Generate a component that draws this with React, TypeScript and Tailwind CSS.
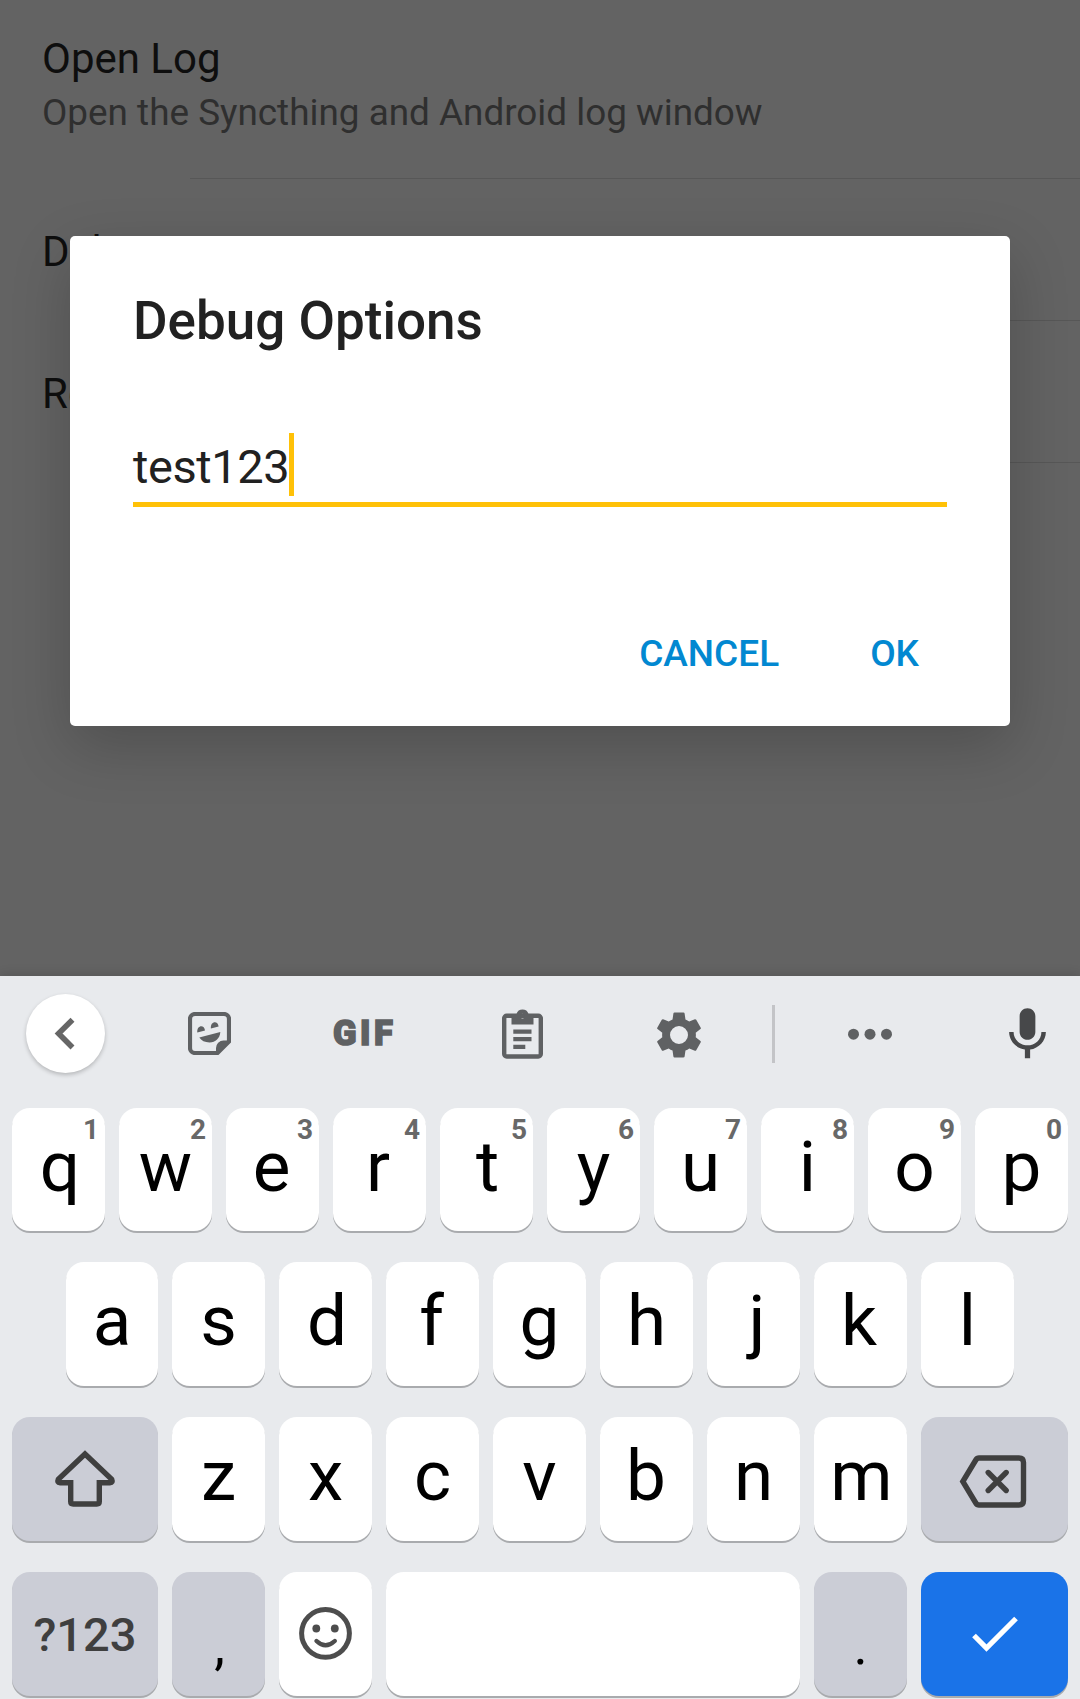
import type { ReactNode } from 'react';

function SettingsRow({ title, summary, className }: { title: string; summary?: string; className: string }) {
  return (
    <div className={`flex flex-col pl-[42px] ${className}`}>
      <div className="text-[42px] leading-[50px] text-[#0e0e0e]">{title}</div>
      {summary && <div className="mt-[7px] text-[36.87px] leading-[44px] text-[#2f2f2f]">{summary}</div>}
      <div className="mt-auto -ml-[42px] pl-[190px]">
        <div className="h-px bg-[#575757]" />
      </div>
    </div>
  );
}

function Key({
  children,
  tone = 'bg-white',
  width = 'w-[93px]',
  height = 'h-[124px]',
}: {
  children?: ReactNode;
  tone?: string;
  width?: string;
  height?: string;
}) {
  return (
    <div
      className={`relative flex shrink-0 justify-center rounded-[18px] shadow-[0_2px_0_#a9abae] ${height} ${tone} ${width}`}
    >
      {children}
    </div>
  );
}

// Optical centring for letters whose ink is off-centre in its advance width.
const NUDGE: Record<string, string> = {
  q: 'pl-[3px]',
  e: 'pr-[2px]',
  r: 'pr-[3px]',
  t: 'pl-[2px]',
  d: 'pl-[3px]',
  f: 'pr-[2px]',
  j: 'pl-[7px]',
  k: 'pr-[3px]',
  m: 'pl-[2px]',
  b: 'pr-[1px]',
};

function Letter({ children }: { children: string }) {
  return <span className={`text-[71px] leading-[118px] text-black ${NUDGE[children] ?? ''}`}>{children}</span>;
}

const GREY = 'bg-[#cbcdd6]';

function Toolbar() {
  return (
    <div className="flex h-[132px] items-start text-[#5f6163]">
      <div className="ml-[26px] mt-[18px] flex size-[79px] items-center justify-center rounded-full bg-white shadow-[0_2px_4px_rgba(0,0,0,0.22)]">
        <svg width="79" height="79" viewBox="0 0 79 79" fill="none" stroke="#666" strokeWidth="5.6">
          <path d="M46.5 25.8 32.6 39.600l13.900 13.900" />
        </svg>
      </div>
      <svg className="ml-[83px] mt-[36px]" width="43" height="43" viewBox="0 0 43 43" fill="none">
        <path
          d="M7 2H36a5 5 0 0 1 5 5V29.5L29.5 41H7a5 5 0 0 1-5-5V7a5 5 0 0 1 5-5Z"
          stroke="currentColor"
          strokeWidth="4.2"
        />
        <path d="M28 42.500V36a7.500 7.500 0 0 1 7.500-7.500H42.500L29.500 42.500Z" fill="currentColor" />
        <path d="M9.300 20.600C8.500 12.800 16.500 12 17 18.600ZM22.900 16.600C22.100 8.800 30.100 8 30.600 14.600Z" fill="currentColor" />
        <path d="M11.300 25.600 32.300 20C32 26 27.500 30.500 21.500 30.500 17 30.500 13.200 28.800 11.300 25.600Z" fill="currentColor" />
      </svg>
      <span className="ml-[102px] mt-[37px] w-[66px] whitespace-nowrap text-[34.500px] font-black leading-[41px] tracking-[3.500px] [-webkit-text-stroke:1.500px_currentColor]">
        GIF
      </span>
      <svg className="ml-[102.500px] mt-[33px]" width="41" height="50" viewBox="0 0 41 50">
        <rect x="2.200" y="6.700" width="36.600" height="40.800" rx="2.500" fill="none" stroke="currentColor" strokeWidth="4.400" />
        <path
          fill="currentColor"
          fillRule="evenodd"
          d="M9.500 5H14.500a6.300 6.300 0 0 1 12 0H31.500V15.500H9.500ZM20.500 4.800a2.400 2.400 0 1 0 0 4.800 2.400 2.400 0 0 0 0-4.800Z"
        />
        <path stroke="currentColor" strokeWidth="4.300" d="M11.300 22.600H29.500M11.300 30.200H29.500M11.300 37.800H23.300" />
      </svg>
      <svg className="ml-[109.500px] mt-[32px]" width="54" height="54" viewBox="0 0 24 24" fill="currentColor">
        <path
          fillRule="evenodd"
          d="M19.430 12.980c.04-.32.07-.64.07-.98s-.03-.66-.07-.98l2.110-1.650c.19-.15.24-.42.12-.64l-2-3.460c-.12-.22-.39-.3-.61-.22l-2.490 1c-.52-.4-1.080-.73-1.690-.98l-.38-2.650C14.460 2.180 14.250 2 14 2h-4c-.25 0-.46.18-.49.42l-.38 2.650c-.61.25-1.170.59-1.690.98l-2.490-1c-.23-.09-.49 0-.61.22l-2 3.460c-.13.22-.07.49.12.64l2.110 1.650c-.04.32-.07.65-.07.98s.03.66.07.98l-2.110 1.650c-.19.15-.24.42-.12.64l2 3.460c.12.22.39.3.61.22l2.490-1c.52.4 1.080.73 1.690.98l.38 2.650c.03.24.24.42.49.42h4c.25 0 .46-.18.49-.42l.38-2.650c.61-.25 1.170-.59 1.690-.98l2.490 1c.23.09.49 0 .61-.22l2-3.460c.12-.22.07-.49-.12-.64l-2.110-1.650zM12 16a4 4 0 1 1 0-8 4 4 0 0 1 0 8z"
        />
      </svg>
      <div className="ml-[66px] mt-[29px] h-[58px] w-[3px] bg-[#c3c4c7]" />
      <svg className="ml-[73px] mt-[52px]" width="44" height="12" viewBox="0 0 44 12" fill="currentColor">
        <circle cx="5.500" cy="6.200" r="5.500" />
        <circle cx="22" cy="6.200" r="5.500" />
        <circle cx="38.500" cy="6.200" r="5.500" />
      </svg>
      <svg className="ml-[104px] mt-[26.700px]" width="63" height="63" viewBox="0 0 24 24" fill="#47484a">
        <path d="M12 14c1.660 0 2.990-1.340 2.990-3L15 5c0-1.660-1.340-3-3-3S9 3.340 9 5v6c0 1.660 1.340 3 3 3zm5.300-3c0 3-2.540 5.100-5.300 5.100S6.700 14 6.700 11H5c0 3.410 2.720 6.230 6 6.720V21h2v-3.280c3.280-.48 6-3.300 6-6.720h-1.700z" />
      </svg>
    </div>
  );
}

function Keyboard() {
  return (
    <div className="relative h-[723px] bg-[#e8eaed] shadow-[0_-2px_10px_rgba(0,0,0,0.12)]">
      <Toolbar />
      <div className="flex flex-col gap-[31px]">
        <div className="flex gap-[14px] pl-[12px]">
          {'qwertyuiop'.split('').map((c, i) => (
            <Key key={c} height="h-[123px]">
              <Letter>{c}</Letter>
              <span className="absolute right-[6px] top-[8px] text-[28px] font-bold leading-[28px] text-[#686868]">
                {(i + 1) % 10}
              </span>
            </Key>
          ))}
        </div>
        <div className="flex gap-[14px] pl-[66px]">
          {'asdfghjkl'.split('').map((c, i) => (
            <Key key={c} width={i === 0 ? 'w-[92px]' : 'w-[93px]'}>
              <Letter>{c}</Letter>
            </Key>
          ))}
        </div>
        <div className="flex gap-[14px] pl-[12px]">
          <Key tone={GREY} width="w-[146px]">
            <svg width="146" height="124" viewBox="0 0 146 124" fill="none" stroke="#3f3f3f" strokeWidth="5.400">
              <path d="M73 37 46.300 62.300Q44.800 65.800 48 65.800H58.700V84.500Q58.700 87 61.200 87H84.800Q87.300 87 87.300 84.500V65.800H98Q101.200 65.800 99.700 62.300Z" />
            </svg>
          </Key>
          {'zxcvbnm'.split('').map((c) => (
            <Key key={c}>
              <Letter>{c}</Letter>
            </Key>
          ))}
          <Key tone={GREY} width="w-[147px]">
            <svg width="147" height="124" viewBox="0 0 147 124" fill="none" stroke="#3f3f3f" strokeWidth="5.400">
              <path d="M58 41H98Q102.500 41 102.500 45.500V83.500Q102.500 88 98 88H58Q56 88 54.800 86L41.800 64.500 54.800 43Q56 41 58 41Z" />
              <path strokeLinecap="round" d="M67.200 55.500 85.200 73.500M85.200 55.500 67.200 73.500" />
            </svg>
          </Key>
        </div>
        <div className="flex gap-[14px] pl-[12px]">
          <Key tone={GREY} width="w-[146px]">
            <span className="text-[47px] font-medium leading-[126px] text-[#3f3f3f]">?123</span>
          </Key>
          <Key tone={GREY}>
            <span className="mt-[12px] pl-[2px] text-[54px] leading-[124px] text-black">,</span>
          </Key>
          <Key>
            <svg width="93" height="124" viewBox="0 0 93 124" fill="none" stroke="#4d4d4d" strokeWidth="5">
              <circle cx="46.500" cy="61.300" r="23.900" />
              <circle cx="37.300" cy="56.500" r="3.900" fill="#4d4d4d" stroke="none" />
              <circle cx="55.800" cy="56.500" r="3.900" fill="#4d4d4d" stroke="none" />
              <path strokeWidth="4.400" strokeLinecap="round" d="M37.500 69Q46.500 77.500 55.800 69" />
            </svg>
          </Key>
          <Key width="w-[414px]" />
          <Key tone={GREY}>
            <span className="mt-[12px] text-[54px] leading-[124px] text-black">.</span>
          </Key>
          <Key tone="bg-[#1a73e8]" width="w-[147px]">
            <svg width="147" height="124" viewBox="0 0 147 124" fill="none" stroke="#fff" strokeWidth="5.200">
              <path d="M53 63.500 65.500 76 95 46.500" />
            </svg>
          </Key>
        </div>
      </div>
    </div>
  );
}

function DebugDialog() {
  return (
    <div className="absolute left-[70px] top-[236px] flex h-[490px] w-[940px] flex-col rounded-[5px] bg-white px-[63px] pt-[54px] shadow-[0_20px_60px_rgba(0,0,0,0.2)]">
      <div className="text-[53px] font-medium leading-[62px] text-[#212121]">Debug Options</div>
      <div className="mt-[81px] flex h-[74px] border-b-[5px] border-[#ffc107]">
        <span className="text-[47px] leading-[67px] tracking-[-0.4px] text-[#212121]">test123</span>
        <div className="h-[63px] w-[5px] bg-[#ffc107]" />
      </div>
      <div className="mt-[125px] flex justify-end gap-[91px] pr-[28px] text-[37px] font-medium leading-[44px] text-[#0288d1]">
        <span>CANCEL</span>
        <span>OK</span>
      </div>
    </div>
  );
}

export default function App() {
  return (
    <div className="relative h-[1699px] w-[1080px] overflow-hidden bg-[#636363] font-['Roboto',sans-serif]">
      <div className="flex h-[976px] flex-col">
        <SettingsRow className="h-[179px] pt-[34px]" title="Open Log" summary="Open the Syncthing and Android log window" />
        <SettingsRow className="h-[142px] pt-[48px]" title="Debug Options" />
        <SettingsRow className="h-[142px] pt-[48px]" title="Reset" />
      </div>
      <DebugDialog />
      <Keyboard />
    </div>
  );
}
